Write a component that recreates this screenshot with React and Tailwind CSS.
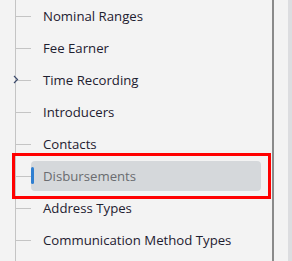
import React from "react";

const items = [
  { label: "Nominal Ranges" },
  { label: "Fee Earner" },
  { label: "Time Recording", expandable: true },
  { label: "Introducers" },
  { label: "Contacts" },
  { label: "Disbursements", selected: true },
  { label: "Address Types" },
  { label: "Communication Method Types" },
];

export default function App() {
  return (
    <div
      className="relative flex h-[261px] w-[292px] overflow-hidden bg-[#f3f3f3]"
      style={{ fontFamily: '"Open Sans", "Noto Sans", sans-serif' }}
    >
      <div className="w-[272px] pl-[15px]">
        <div className="flex h-full flex-col border-l border-[#c4c4c4]">
          {items.map((it) => (
            <div key={it.label} className="relative flex h-8 shrink-0 items-center">
              {it.expandable && (
                <svg
                  className="absolute left-[-3px] top-[11px]"
                  width="6"
                  height="9"
                  viewBox="0 0 6 9"
                >
                  <path d="M1 1 L4.5 4.5 L1 8" fill="none" stroke="#3b4a6b" strokeWidth="1.2" />
                </svg>
              )}
              <div className="h-px w-[15px] bg-[#c4c4c4]" />
              {it.selected ? (
                <div className="relative flex h-[30px] w-[230px] items-center rounded-[4px] bg-[#d5d8db] pl-3">
                  <div className="absolute left-0 top-[6px] h-[17px] w-[3px] rounded-full bg-[#2f7fd1]" />
                  <span className="-mt-px text-[13.2px] leading-5 text-[#6a6c70]">{it.label}</span>
                </div>
              ) : (
                <span className="-mt-px pl-3 text-[13.2px] leading-5 text-[#1e2030]">{it.label}</span>
              )}
            </div>
          ))}
        </div>
      </div>
      <div className="h-full w-[2px] bg-[#8a8a8a]" />
      <div className="h-full w-[14px]" />
      <div className="h-full w-[4px] bg-[#dcdde0]" />
      <div className="pointer-events-none absolute left-[12px] top-[153px] h-[46px] w-[259px] border-[3px] border-[#f00]" />
    </div>
  );
}
